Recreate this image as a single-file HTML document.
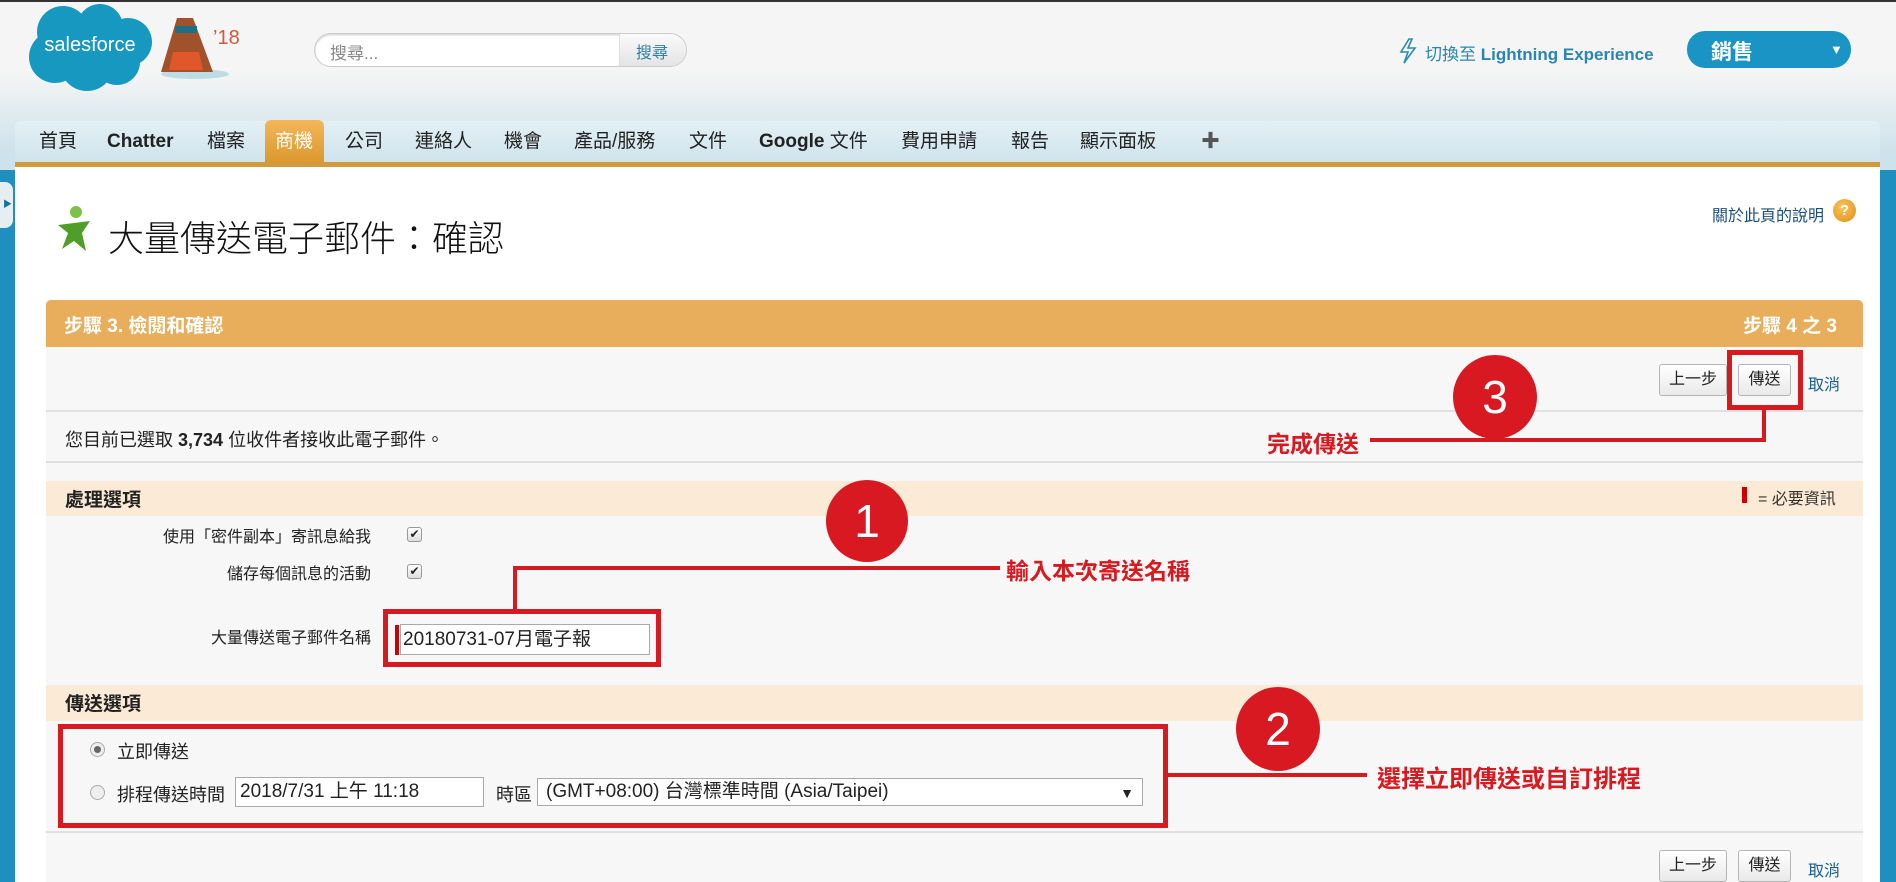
<!DOCTYPE html>
<html><head><meta charset="utf-8"><style>
*{margin:0;padding:0;box-sizing:border-box}
body{width:1896px;height:882px;overflow:hidden;position:relative;background:#1f8fbf;font-family:"Liberation Sans","Noto Sans CJK TC",sans-serif;color:#222}
.a{position:absolute;white-space:nowrap}
.top{left:0;top:0;width:1896px;height:170px;background:linear-gradient(#f5f5f5 0,#f5f5f5 70px,#cde2ea 150px,#cde2ea 170px);border-top:2px solid #333}
.nav{left:15px;top:121px;width:1865px;height:46px;background:linear-gradient(#e3f0f5,#cfe4ec);border-radius:6px 6px 0 0;border-bottom:5px solid #d39b3c}
.nav span{position:absolute;top:9px;font-size:19px;line-height:24px;height:24px;color:#222}
.red{color:#d71920;font-weight:bold;font-size:21px}
.btn{position:absolute;height:32px;border:1px solid #b5b5b5;border-radius:3px;background:linear-gradient(#fff,#e9e9e9);font-size:16px;text-align:center;line-height:30px;color:#222}
.circ{position:absolute;border-radius:50%;background:#d81921;color:#fff;font-size:46px;text-align:center;font-family:"Liberation Sans",sans-serif}
.rl{position:absolute;background:#d71920}
.cb{position:absolute;width:15px;height:15px;border:1px solid #999;border-radius:3px;background:linear-gradient(#fff,#ddd);font-size:12px;line-height:13px;text-align:center;color:#222}
</style></head><body>
<div class="a top"></div>
<svg class="a" style="left:25px;top:2px" width="130" height="90" viewBox="0 0 130 90">
<g fill="#1798c1"><circle cx="38" cy="30" r="26"/><circle cx="75" cy="25" r="23"/><circle cx="103" cy="40" r="24"/><circle cx="30" cy="55" r="26"/><circle cx="62" cy="62" r="27"/><circle cx="92" cy="60" r="23"/></g>
<text x="65" y="49" fill="#fff" font-size="20" text-anchor="middle" font-family="Liberation Sans">salesforce</text></svg>
<svg class="a" style="left:155px;top:12px" width="90" height="70" viewBox="0 0 90 70">
<ellipse cx="40" cy="62" rx="34" ry="5" fill="#bcdde6"/>
<path d="M22 6 L38 6 L58 60 L6 60 Z" fill="#a1522a"/><rect x="20" y="14" width="22" height="7" fill="#1d6f86"/>
<path d="M18 40 L44 40 L48 58 L14 58 Z" fill="#e0572a"/>
<text x="58" y="32" fill="#d4583a" font-size="20" font-family="Liberation Sans">’18</text></svg>
<div class="a" style="left:314px;top:33px;width:373px;height:34px;border:1px solid #ccc;border-radius:17px;background:#fff;box-shadow:inset 0 1px 2px #ccc"></div>
<div class="a" style="left:619px;top:34px;width:67px;height:32px;border-radius:0 16px 16px 0;background:linear-gradient(#fafafa,#e4e4e4);border-left:1px solid #ddd"></div>
<div class="a" style="left:330px;top:39px;font-size:17px;color:#888">搜尋...</div>
<div class="a" style="left:636px;top:39px;font-size:16px;color:#2e7fa8">搜尋</div>
<svg class="a" style="left:1399px;top:38px" width="18" height="26" viewBox="0 0 18 26"><path d="M10 1 L2 14 L9 14 L5 25 L16 10 L9 10 L13 1 Z" fill="none" stroke="#2a8cb5" stroke-width="1.6"/></svg>
<div class="a" style="left:1425px;top:40px;font-size:17px;color:#2a86b0">切換至 <b>Lightning Experience</b></div>
<div class="a" style="left:1687px;top:31px;width:164px;height:37px;border-radius:18px;background:#1a94c4"></div>
<div class="a" style="left:1711px;top:36px;font-size:21px;color:#fff;font-weight:bold">銷售</div>
<div class="a" style="left:1830px;top:42px;font-size:13px;color:#fff">▼</div>
<div class="a" style="left:0;top:182px;width:13px;height:46px;background:#e6eef2;border-radius:0 8px 8px 0"></div>
<div class="a" style="left:3px;top:197px;font-size:9px;color:#1a6fa0">▶</div>
<div class="a nav">
<span style="left:24px">首頁</span><span style="left:92px;font-weight:bold">Chatter</span><span style="left:192px">檔案</span>
<span style="left:250px;top:-1px;width:59px;height:42px;background:linear-gradient(#f3b75a,#dd9830);border-radius:6px 6px 0 0"></span>
<span style="left:260px;color:#fff">商機</span><span style="left:330px">公司</span><span style="left:400px">連絡人</span><span style="left:489px">機會</span><span style="left:559px">產品/服務</span><span style="left:674px">文件</span><span style="left:744px"><b>Google</b> 文件</span><span style="left:886px">費用申請</span><span style="left:996px">報告</span><span style="left:1065px">顯示面板</span><span style="left:1186px;font-weight:bold;color:#555">✚</span>
</div>
<div class="a" style="left:15px;top:167px;width:1865px;height:715px;background:#fff"></div>
<svg class="a" style="left:54px;top:205px" width="42" height="50" viewBox="0 0 42 50"><circle cx="22" cy="7" r="6" fill="#7cc245"/><path d="M4 20 L36 16 L28 28 L32 46 L20 36 L8 44 L14 28 Z" fill="#4f9e2a"/></svg>
<div class="a" style="left:108px;top:210px;font-size:36px;font-weight:300;color:#111">大量傳送電子郵件：確認</div>
<div class="a" style="left:1712px;top:202px;font-size:16px;color:#1b4f7a">關於此頁的說明</div>
<div class="a" style="left:1833px;top:199px;width:23px;height:23px;border-radius:50%;background:radial-gradient(circle at 40% 35%,#fbc35a,#e08d14);color:#fff;font-size:15px;font-weight:bold;text-align:center;line-height:23px">?</div>
<div class="a" style="left:46px;top:300px;width:1817px;height:582px;background:#f7f7f7"></div>
<div class="a" style="left:46px;top:300px;width:1817px;height:47px;background:#e8ae5b;border-radius:5px 5px 0 0"></div>
<div class="a" style="left:64px;top:311px;font-size:19px;color:#fff;font-weight:bold">步驟 3. 檢閱和確認</div>
<div class="a" style="left:1743px;top:311px;font-size:19px;color:#fff;font-weight:bold">步驟 4 之 3</div>
<div class="a" style="left:46px;top:410px;width:1817px;height:2px;background:#e0e0e0"></div>
<div class="a" style="left:46px;top:461px;width:1817px;height:2px;background:#e0e0e0"></div>
<div class="btn" style="left:1659px;top:364px;width:68px">上一步</div>
<div class="btn" style="left:1738px;top:364px;width:53px">傳送</div>
<div class="a" style="left:1808px;top:371px;font-size:16px;color:#1b5f8a">取消</div>
<div class="a" style="left:65px;top:426px;font-size:18px">您目前已選取 <b>3,734</b> 位收件者接收此電子郵件。</div>
<div class="a" style="left:46px;top:481px;width:1817px;height:35px;background:#fbead6"></div>
<div class="a" style="left:65px;top:485px;font-size:19px;font-weight:bold">處理選項</div>
<div class="a" style="left:1742px;top:487px;width:5px;height:16px;background:#c00"></div>
<div class="a" style="left:1758px;top:485px;font-size:16px;color:#333">= 必要資訊</div>
<div class="a" style="right:1525px;top:523px;font-size:16px">使用「密件副本」寄訊息給我</div>
<div class="cb" style="left:407px;top:527px">✔</div>
<div class="a" style="right:1525px;top:560px;font-size:16px">儲存每個訊息的活動</div>
<div class="cb" style="left:407px;top:564px">✔</div>
<div class="a" style="right:1525px;top:624px;font-size:16px">大量傳送電子郵件名稱</div>
<div class="a" style="left:395px;top:625px;width:4px;height:30px;background:#c00"></div>
<div class="a" style="left:400px;top:624px;width:250px;height:31px;border:1px solid #aaa;background:#fff;font-size:19px;padding:3px 2px;line-height:24px">20180731-07月電子報</div>
<div class="a" style="left:46px;top:685px;width:1817px;height:36px;background:#fbead6"></div>
<div class="a" style="left:65px;top:689px;font-size:19px;font-weight:bold">傳送選項</div>
<div class="a" style="left:90px;top:742px;width:15px;height:15px;border-radius:50%;border:1px solid #aaa;background:#eee"><div style="margin:3px;width:7px;height:7px;border-radius:50%;background:#666"></div></div>
<div class="a" style="left:117px;top:738px;font-size:18px">立即傳送</div>
<div class="a" style="left:90px;top:785px;width:15px;height:15px;border-radius:50%;border:1px solid #aaa;background:#eee"></div>
<div class="a" style="left:117px;top:781px;font-size:18px">排程傳送時間</div>
<div class="a" style="left:235px;top:777px;width:249px;height:30px;border:1px solid #aaa;background:#fff;font-size:19px;padding:2px 4px;line-height:24px">2018/7/31 上午 11:18</div>
<div class="a" style="left:496px;top:781px;font-size:18px">時區</div>
<div class="a" style="left:537px;top:778px;width:606px;height:28px;border:1px solid #aaa;background:#fff;font-size:19px;padding:1px 8px;line-height:24px">(GMT+08:00) 台灣標準時間 (Asia/Taipei)<span style="position:absolute;right:8px;font-size:14px;top:2px">▼</span></div>
<div class="a" style="left:46px;top:831px;width:1817px;height:2px;background:#e0e0e0"></div>
<div class="btn" style="left:1659px;top:850px;width:68px">上一步</div>
<div class="btn" style="left:1738px;top:850px;width:53px">傳送</div>
<div class="a" style="left:1808px;top:857px;font-size:16px;color:#1b5f8a">取消</div>
<div class="a" style="left:383px;top:609px;width:278px;height:58px;border:5px solid #d71920"></div>
<div class="rl" style="left:513px;top:566px;width:4px;height:44px"></div>
<div class="rl" style="left:513px;top:566px;width:487px;height:4px"></div>
<div class="circ" style="left:826px;top:480px;width:82px;height:82px;line-height:82px">1</div>
<div class="a red" style="left:1006px;top:552px;font-size:23px">輸入本次寄送名稱</div>
<div class="a" style="left:58px;top:724px;width:1110px;height:104px;border:5px solid #d71920"></div>
<div class="rl" style="left:1167px;top:773px;width:200px;height:4px"></div>
<div class="circ" style="left:1236px;top:687px;width:84px;height:84px;line-height:84px">2</div>
<div class="a red" style="left:1377px;top:759px;font-size:24px">選擇立即傳送或自訂排程</div>
<div class="a" style="left:1727px;top:350px;width:76px;height:60px;border:5px solid #d71920"></div>
<div class="rl" style="left:1762px;top:408px;width:4px;height:34px"></div>
<div class="rl" style="left:1370px;top:438px;width:396px;height:4px"></div>
<div class="circ" style="left:1453px;top:355px;width:84px;height:84px;line-height:84px">3</div>
<div class="a red" style="left:1267px;top:425px;font-size:23px">完成傳送</div>
</body></html>
